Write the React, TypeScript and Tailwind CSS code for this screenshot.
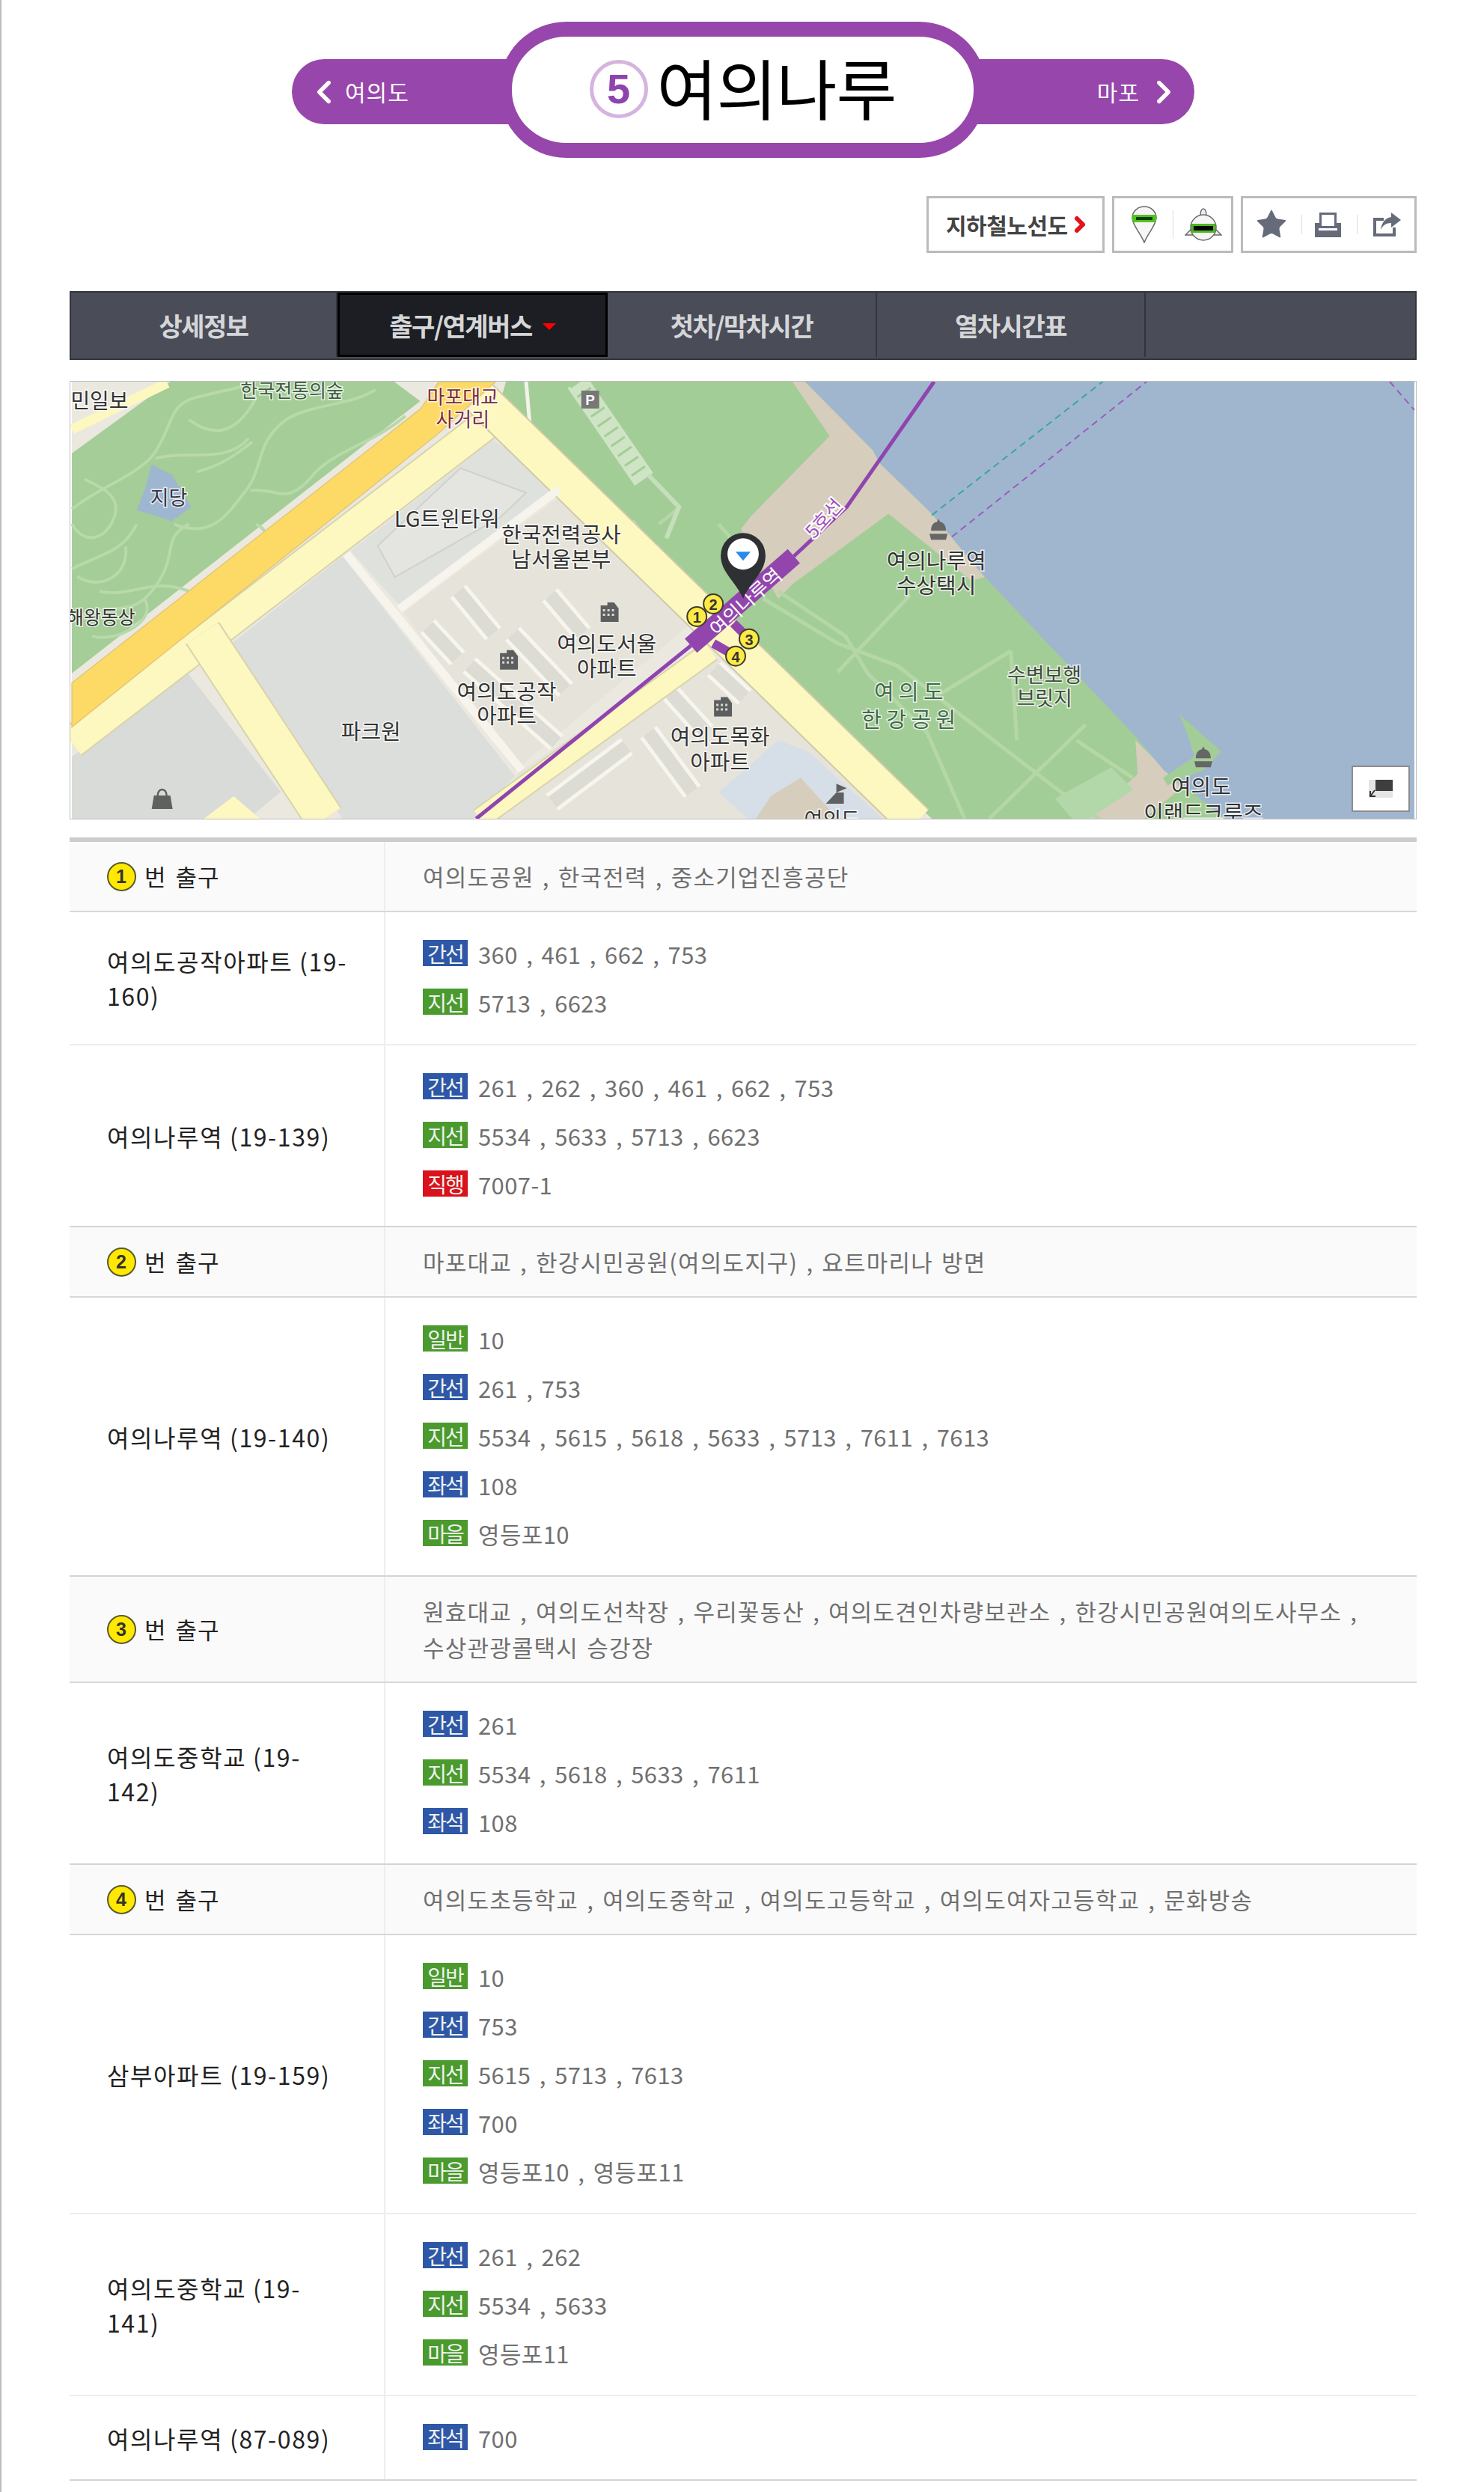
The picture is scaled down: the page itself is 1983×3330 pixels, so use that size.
import { ChevronLeft, ChevronRight, Star } from 'lucide-react'

type Line = [string, string]

interface Stop {
  name: string
  lines: Line[]
}

interface Exit {
  no: number
  desc: string
  stops: Stop[]
}

const badgeColors: Record<string, string> = {
  간선: 'bg-[#2f57a8]',
  지선: 'bg-[#4b9a2e]',
  직행: 'bg-[#d9121c]',
  일반: 'bg-[#4b9a2e]',
  좌석: 'bg-[#2f57a8]',
  마을: 'bg-[#4b9a2e]',
}

const exits: Exit[] = [
  {
    no: 1,
    desc: '여의도공원 , 한국전력 , 중소기업진흥공단',
    stops: [
      {
        name: '여의도공작아파트 (19-\n160)',
        lines: [
          ['간선', '360 , 461 , 662 , 753'],
          ['지선', '5713 , 6623'],
        ],
      },
      {
        name: '여의나루역 (19-139)',
        lines: [
          ['간선', '261 , 262 , 360 , 461 , 662 , 753'],
          ['지선', '5534 , 5633 , 5713 , 6623'],
          ['직행', '7007-1'],
        ],
      },
    ],
  },
  {
    no: 2,
    desc: '마포대교 , 한강시민공원(여의도지구) , 요트마리나 방면',
    stops: [
      {
        name: '여의나루역 (19-140)',
        lines: [
          ['일반', '10'],
          ['간선', '261 , 753'],
          ['지선', '5534 , 5615 , 5618 , 5633 , 5713 , 7611 , 7613'],
          ['좌석', '108'],
          ['마을', '영등포10'],
        ],
      },
    ],
  },
  {
    no: 3,
    desc: '원효대교 , 여의도선착장 , 우리꽃동산 , 여의도견인차량보관소 , 한강시민공원여의도사무소 ,\n수상관광콜택시 승강장',
    stops: [
      {
        name: '여의도중학교 (19-\n142)',
        lines: [
          ['간선', '261'],
          ['지선', '5534 , 5618 , 5633 , 7611'],
          ['좌석', '108'],
        ],
      },
    ],
  },
  {
    no: 4,
    desc: '여의도초등학교 , 여의도중학교 , 여의도고등학교 , 여의도여자고등학교 , 문화방송',
    stops: [
      {
        name: '삼부아파트 (19-159)',
        lines: [
          ['일반', '10'],
          ['간선', '753'],
          ['지선', '5615 , 5713 , 7613'],
          ['좌석', '700'],
          ['마을', '영등포10 , 영등포11'],
        ],
      },
      {
        name: '여의도중학교 (19-\n141)',
        lines: [
          ['간선', '261 , 262'],
          ['지선', '5534 , 5633'],
          ['마을', '영등포11'],
        ],
      },
      {
        name: '여의나루역 (87-089)',
        lines: [['좌석', '700']],
      },
    ],
  },
]

const tabs = [
  { label: '상세정보', width: 'w-[356px]' },
  { label: '출구/연계버스', width: 'w-[361px]' },
  { label: '첫차/막차시간', width: 'w-[360px]' },
  { label: '열차시간표', width: 'w-[359px]' },
  { label: '', width: 'flex-1' },
]

function Label({ x, y, size = 27, fill = '#333', children }: { x: number; y: number; size?: number; fill?: string; children: string }) {
  return (
    <text x={x} y={y} fontSize={size} fill={fill} textAnchor="middle" dominantBaseline="central" stroke="#fff" strokeOpacity={0.75} strokeWidth={3} paintOrder="stroke">
      {children}
    </text>
  )
}

function Strip({ d, w = 18 }: { d: string; w?: number }) {
  return (
    <>
      <path d={d} fill="none" stroke="#f7f5ee" strokeWidth={w + 10} />
      <path d={d} fill="none" stroke="#dddcd4" strokeWidth={w} />
    </>
  )
}

function Building({ x, y }: { x: number; y: number }) {
  return (
    <g transform={`translate(${x - 12} ${y - 13})`}>
      <path d="M0 26V4h9V0h9l6 8v18z" fill="#5d5f5f" />
      <path d="M3 9h3v3H3zm6 0h3v3H9zm6 0h3v3h-3zM3 15h3v3H3zm6 0h3v3H9zm6 0h3v3h-3z" fill="#d8d8d4" />
    </g>
  )
}

function Boat({ x, y }: { x: number; y: number }) {
  return (
    <g transform={`translate(${x - 12} ${y - 14})`} fill="#666">
      <path d="M12 0l2 4c5 1 8 5 8 12H2C2 9 5 5 10 4z" />
      <path d="M0 20h24l-2 8H2z" />
    </g>
  )
}

function Exit({ no, size = 26 }: { no: number; size?: number }) {
  const pos: Record<number, [number, number]> = { 1: [931, 824], 2: [953, 807], 3: [1001, 854], 4: [983, 877] }
  const [x, y] = pos[no]
  return (
    <g>
      <circle cx={x} cy={y} r={size / 2} fill="#fdea45" stroke="#3b3b2c" strokeWidth={2} />
      <text x={x} y={y + 1} fontSize={20} fontWeight={700} fill="#333" textAnchor="middle" dominantBaseline="central" className="font-['Liberation_Sans',sans-serif]">
        {no}
      </text>
    </g>
  )
}

function MapArt() {
  return (
    <svg viewBox="93 509 1800 586" className="block w-full h-full font-['Noto_Sans_CJK_KR',sans-serif]">
      <rect x="93" y="509" width="1800" height="586" fill="#ebe8df" />
      {/* parks */}
      <path d="M93 605L225 509H525L560 535L93 900z" fill="#a4cd97" />
      <path d="M675 509H1200L1640 1095H1246L1018 880L948 809L667 537z" fill="#a3cd96" />
      <path d="M93 573L221 511" stroke="#fdf8c0" strokeWidth={13} fill="none" />
      {/* left park paths */}
      <g fill="none" stroke="#b8d9aa" strokeWidth={4}>
        <path d="M93 680C130 650 170 640 200 610C230 570 220 540 260 530C300 520 330 515 340 509" />
        <path d="M93 760C130 740 160 740 180 700M93 830C130 800 170 830 200 790C240 740 210 720 250 700" />
        <path d="M230 700C280 720 300 690 330 650C350 620 340 590 380 560C410 540 470 540 500 520" />
        <path d="M130 790C170 800 200 770 250 790C280 800 300 770 330 740M260 630C300 620 320 600 335 590" />
        <path d="M93 700C110 730 140 720 150 690C160 660 130 650 110 640" />
        <path d="M205 612C250 600 300 620 330 585M332 655C370 650 380 680 420 630C450 600 500 590 540 555" />
        <path d="M100 770C130 790 170 770 165 730M300 760C330 770 380 720 340 700M250 560C290 590 320 570 340 530M120 850C150 860 210 830 190 800" />
      </g>
      <path d="M200 620L227 634L253 677L227 696L180 681L191 653z" fill="#9fb6d0" />
      {/* river bank and sand */}
      <path d="M1003 690L1109 582L1059 509H1076L1167 601L1176 618L1246 686L1317 771L1299 776L1188 686L1060 780L1040 800L990 707z" fill="#d6cdbc" />
      <path d="M1519 990L1560 1030L1580 1054L1531 1095H1452L1499 1056L1522 1035z" fill="#d6cdbc" />
      <path d="M1076 509H1893V1095H1640L1557 1030L1522 988L1317 771L1246 686L1176 618L1167 601z" fill="#a0b6cf" />
      <path d="M1578 955L1634 1005L1610 1030L1562 1050L1556 1040L1598 1012L1590 985z" fill="#a3cd96" />
      <path d="M1411 1068L1487 1026L1516 1056L1457 1095H1434z" fill="#b2d8aa" />
      <path d="M1246 688L1475 509" stroke="#3aa6a0" strokeWidth={2} strokeDasharray="9 6" fill="none" />
      <path d="M1273 717L1534 509M1860 509L1893 547" stroke="#9a5cbc" strokeWidth={2} strokeDasharray="9 6" fill="none" />
      {/* right park paths */}
      <g fill="none" stroke="#b5d7a8" strokeWidth={5}>
        <path d="M1020 800L1120 860L1200 890L1290 960L1420 1060L1470 1095" />
        <path d="M1040 790L1130 850L1160 900L1240 980L1290 1095" />
        <path d="M1120 898L1217 795M1252 931L1352 870M1323 1095L1452 969M1352 870L1360 990M1440 990L1515 1040" />
        <path d="M880 700L905 680M1000 745L960 700" />
      </g>
      {/* top green: parking and paths */}
      <path d="M770 509L860 640" stroke="#cfe3c5" strokeWidth={30} fill="none" />
      <path d="M770 509L860 640" stroke="#a3cd96" strokeWidth={22} strokeDasharray="3 13" fill="none" />
      <path d="M702 509L708 578L755 620" stroke="#f4f3ea" strokeWidth={5} fill="none" />
      <path d="M866 634L907 677L890 719" stroke="#c5dfba" strokeWidth={6} fill="none" />
      {/* city blocks */}
      <path d="M306 861L456 743L687 1038L632 1095H455z" fill="#dcdedb" />
      <path d="M93 1012L247 898L373 1059L330 1095H93z" fill="#d9dbd8" />
      <path d="M467 736L658 587L746 648L532 809z" fill="#dfe1dd" />
      <path d="M503 729L614 625L702 658L667 691L526 771z" fill="#e4e5e0" stroke="#cfd1cc" strokeWidth={2} />
      <path d="M538 818L749 662L919 837L687 1030z" fill="#e6e3da" />
      <path d="M696 1030L943 866L1200 1095H640z" fill="#e6e3da" />
      <path d="M1040 990L1080 1005L1180 1095H1000L960 1060z" fill="#d6dee7" />
      <path d="M1030 1065L1070 1040L1120 1095H1010z" fill="#d6cdbc" />
      {/* apartment strips */}
      <Strip d="M570 837L610 880" />
      <Strip d="M611 790L658 847" />
      <Strip d="M734 795L778 847" />
      <Strip d="M626 889L743 993" />
      <Strip d="M684 847L755 922" />
      <Strip d="M737 1073L837 998" />
      <Strip d="M866 979L925 1059" />
      <Strip d="M896 927L943 979" />
      <Strip d="M954 894L995 932" />
      <path d="M840 700L900 770" stroke="#f7f5ee" strokeWidth={16} fill="none" />
      {/* roads */}
      <path d="M93 993L650 565" stroke="#d8d3ad" strokeWidth={44} fill="none" />
      <path d="M93 993L650 565" stroke="#fdf8c0" strokeWidth={40} fill="none" />
      <path d="M268 846L432 1095" stroke="#d8d3ad" strokeWidth={54} fill="none" />
      <path d="M268 846L432 1095" stroke="#fdf8c0" strokeWidth={50} fill="none" />
      <path d="M640 530L1225 1100" stroke="#cfcaa8" strokeWidth={50} fill="none" />
      <path d="M640 530L1225 1100" stroke="#fdf8c0" strokeWidth={46} fill="none" />
      <path d="M640 1095L950 870" stroke="#d8d3ad" strokeWidth={30} fill="none" />
      <path d="M640 1095L950 870" stroke="#fdf8c0" strokeWidth={26} fill="none" />
      <path d="M93 913L561 545L585 509H661L585 578L93 972z" fill="#fdda66" stroke="#e0c87a" strokeWidth={1.5} />
      <path d="M532 814L746 653M461 740L696 1030" stroke="#f6f4ec" strokeWidth={11} fill="none" />
      <path d="M270 1095L310 1065L345 1095z" fill="#fdf8c0" />
      {/* line 5 */}
      <path d="M1061 743L1132 677L1249 509M923 863L635 1095" stroke="#8f44b0" strokeWidth={5} fill="none" />
      <path d="M980 833L1000 853M953 860L983 877" stroke="#9246ad" strokeWidth={12} fill="none" />
      <path d="M923 863L1061 743" stroke="#9246ad" strokeWidth={25} fill="none" />
      <g className="font-['Noto_Sans_CJK_KR',sans-serif]">
        <text x={995} y={803} fontSize={26} fill="#fff" textAnchor="middle" dominantBaseline="central" transform="rotate(-42 995 803)">
          여의나루역
        </text>
        <text x={1100} y={691} fontSize={25} fill="#a04fc0" stroke="#fff" strokeWidth={4} paintOrder="stroke" textAnchor="middle" dominantBaseline="central" transform="rotate(-48 1100 691)">
          5호선
        </text>
      </g>
      {[1, 2, 3, 4].map((n) => (
        <Exit key={n} no={n} />
      ))}
      {/* pin */}
      <path d="M993 800C984 778 963 765 963 742A30 30 0 0 1 1023 742C1023 765 1002 778 993 800z" fill="#2e3033" />
      <circle cx={993} cy={740} r={21} fill="#fff" />
      <path d="M983 737H1003L993 749z" fill="#2a8ae8" />
      {/* poi icons */}
      <rect x={776} y={521} width={24} height={24} fill="#777" />
      <text x={788} y={534} fontSize={19} fontWeight={700} fill="#fff" textAnchor="middle" dominantBaseline="central" className="font-['Liberation_Sans',sans-serif]">
        P
      </text>
      <Building x={814} y={818} />
      <Building x={679} y={882} />
      <Building x={966} y={945} />
      <Boat x={1255} y={707} />
      <Boat x={1610} y={1012} />
      <path d="M1104 1075H1128V1060H1118V1048L1132 1054L1118 1060" fill="#5f6060" />
      <path d="M203 1064H225L228 1082H200z" fill="#5f6060" />
      <path d="M208 1064C208 1053 220 1053 220 1064" fill="none" stroke="#5f6060" strokeWidth={2.5} />
      {/* labels */}
      <Label x={130} y={533} size={28}>민일보</Label>
      <Label x={388} y={519} size={25} fill="#3d5c40">한국전통의숲</Label>
      <Label x={617} y={528} size={26} fill="#7a2b3b">마포대교</Label>
      <Label x={617} y={558} size={26} fill="#7a2b3b">사거리</Label>
      <Label x={223} y={663} size={27} fill="#334">지당</Label>
      <Label x={132} y={823} size={25} fill="#333">해왕동상</Label>
      <Label x={596} y={691} size={29}>LG트윈타워</Label>
      <Label x={749} y={712} size={29}>한국전력공사</Label>
      <Label x={749} y={745} size={29}>남서울본부</Label>
      <Label x={810} y={858} size={29}>여의도서울</Label>
      <Label x={810} y={891} size={29}>아파트</Label>
      <Label x={676} y={922} size={29}>여의도공작</Label>
      <Label x={676} y={955} size={29}>아파트</Label>
      <Label x={494} y={976} size={29}>파크원</Label>
      <Label x={962} y={983} size={29}>여의도목화</Label>
      <Label x={962} y={1017} size={29}>아파트</Label>
      <Label x={1252} y={747} size={29}>여의나루역</Label>
      <Label x={1252} y={780} size={29}>수상택시</Label>
      <Label x={1215} y={922} size={29} fill="#3f6b4a">여 의 도</Label>
      <Label x={1215} y={960} size={29} fill="#3f6b4a">한 강 공 원</Label>
      <Label x={1397} y={901} size={27} fill="#3d4a3d">수변보행</Label>
      <Label x={1397} y={932} size={27} fill="#3d4a3d">브릿지</Label>
      <Label x={1607} y={1050} size={29}>여의도</Label>
      <Label x={1610} y={1085} size={29}>이랜드크루즈</Label>
      <Label x={1112} y={1095} size={27}>여의도</Label>
      <Label x={212} y={1108} size={27}>IFC몰</Label>
    </svg>
  )
}

function PinIcon() {
  return (
    <svg viewBox="0 0 34 50" className="w-[34px] h-[50px]">
      <path d="M17 49C12 36 1 26 1 16A16 15 0 0 1 33 16C33 26 22 36 17 49z" fill="#f6f6f6" stroke="#6a6a6a" strokeWidth={1.5} />
      <path d="M1 12H33V22H1z" fill="#53c21f" />
      <path d="M6 15H28V19H6z" fill="#143b0a" />
    </svg>
  )
}

function BoatIcon() {
  return (
    <svg viewBox="0 0 50 44" className="w-[50px] h-[44px]">
      <path d="M25 1C22 1 21 4 21 11H29C29 4 28 1 25 1z" fill="#eee" stroke="#6a6a6a" strokeWidth={1.5} />
      <path d="M10 27L1 36H13M40 27L49 36H37" fill="#eee" stroke="#6a6a6a" strokeWidth={1.5} />
      <circle cx={25} cy={26} r={17} fill="#f6f6f6" stroke="#6a6a6a" strokeWidth={1.5} />
      <path d="M9 21H41V33H9z" fill="#4fb81f" />
      <path d="M12 24H38V30H12z" fill="#050505" />
    </svg>
  )
}

function Badge({ type }: { type: string }) {
  return (
    <span className={`${badgeColors[type]} mt-[14px] flex h-[35px] w-[60px] shrink-0 items-center justify-center text-[28px] leading-none tracking-[-2px] text-[#eef3ee]`}>
      {type}
    </span>
  )
}

function ExitBadge({ no }: { no: number }) {
  return (
    <span className="flex h-[39px] w-[39px] shrink-0 items-center justify-center rounded-full border-2 border-[#5a5a30] bg-[#ffe900] font-['Liberation_Sans',sans-serif] text-[25px] font-bold leading-none text-[#333]">
      {no}
    </span>
  )
}

export default function App() {
  return (
    <div className="min-h-[3330px] border-l-2 border-[#bcbcbc] bg-white pl-[91px] font-['Noto_Sans_CJK_KR',sans-serif]">
      <div className="w-[1800px] pt-[29px]">
        {/* station title */}
        <div className="relative flex h-[182px] items-center justify-center">
          <div className="mt-[5px] flex h-[87px] w-[1206px] items-center justify-between rounded-[44px] bg-[#9747ab] pl-[18px] pr-[16px] text-[30px] text-white">
            <span className="flex items-center gap-[3px] tracking-[1px]">
              <ChevronLeft size={50} strokeWidth={2.6} />
              여의도
            </span>
            <span className="flex items-center gap-[7px] tracking-[1px]">
              마포
              <ChevronRight size={50} strokeWidth={2.6} />
            </span>
          </div>
          <div className="absolute left-[574px] top-0 flex h-[182px] w-[651px] items-center justify-center rounded-[90px] border-x-[17px] border-y-[20px] border-[#9747ab] bg-white">
            <span className="mr-[12px] mb-[2px] flex h-[78px] w-[78px] items-center justify-center rounded-full border-[5px] border-[#d5b4e0] font-['Liberation_Sans',sans-serif] text-[56px] font-bold leading-none text-[#8e44ad]">
              5
            </span>
            <span className="mb-[10px] text-[88px] leading-none tracking-[-1px] text-black">여의나루</span>
          </div>
        </div>

        {/* map shortcuts */}
        <div className="mt-[51px] flex h-[76px] justify-end gap-[10px]">
          <div className="flex w-[238px] items-center border-[3px] border-[#bbb] pl-[23px]">
            <span className="text-[30px] font-bold tracking-[-0.5px] text-[#444]">지하철노선도</span>
            <ChevronRight size={32} strokeWidth={4.5} className="text-[#e3131b]" />
          </div>
          <div className="flex w-[162px] items-center border-[3px] border-[#bbb] pl-[23px]">
            <PinIcon />
            <span className="ml-[21px] mr-[15px] h-[38px] w-[1px] bg-[#ddd]" />
            <BoatIcon />
          </div>
          <div className="flex w-[235px] items-center border-[3px] border-[#bbb] pl-[15px] text-[#666b7a]">
            <Star size={46} fill="currentColor" strokeWidth={0} />
            <span className="mx-[17px] h-[26px] w-[1px] bg-[#ddd]" />
            <svg viewBox="0 0 35 33" className="h-[33px] w-[35px]" fill="currentColor">
              <path d="M6 0H29V14H35V33H0V14H6zM9 3V18H26V3zM5 21V24H30V21z" fillRule="evenodd" />
            </svg>
            <span className="mx-[21px] h-[26px] w-[1px] bg-[#ddd]" />
            <svg viewBox="0 0 37 32" className="h-[32px] w-[37px]" fill="currentColor">
              <path d="M0 7H14V11H4V28H26V20H30V32H0z" />
              <path d="M24 0L37 10L24 20V14C17 14 13 17 10 23C11 14 16 7 24 6z" />
            </svg>
          </div>
        </div>

        {/* tabs */}
        <div className="mt-[51px] flex h-[92px] border-2 border-[#33353d] bg-[#4a4d58]">
          {tabs.map((tab, i) => (
            <div
              key={i}
              className={
                i === 1
                  ? `${tab.width} mb-[2px] flex items-center justify-center border-[3px] border-black bg-[#1c1e24] text-[34px] font-bold tracking-[-1.5px] text-[#d5d6d8]`
                  : `${tab.width} mb-[2px] flex items-center justify-center border-r-2 border-[#33353d] text-[34px] font-bold tracking-[-1.5px] text-[#d5d6d8] last:border-r-0`
              }
            >
              {tab.label}
              {i === 1 && <span className="ml-[14px] mt-[4px] h-0 w-0 border-x-[9px] border-t-[9px] border-x-transparent border-t-[#ff0000]" />}
            </div>
          ))}
        </div>

        {/* map */}
        <div className="relative mt-[28px] h-[586px] border border-[#bdbdbd]">
          <MapArt />
          <div className="absolute bottom-[9px] right-[8px] flex h-[62px] w-[78px] items-center justify-center border-2 border-[#8c8c8c] bg-white">
            <svg viewBox="0 0 32 24" className="h-[24px] w-[32px]">
              <rect x={0} y={0} width={32} height={24} fill="#e4e4e4" />
              <rect x={9} y={0} width={23} height={15} fill="#3e3e3e" />
              <path d="M8 14L2 22M2 15V22H9" stroke="#333" strokeWidth={2} fill="none" />
            </svg>
          </div>
        </div>

        {/* exits */}
        <div className="mt-[24px] border-t-[6px] border-[#cccccc]">
          {exits.map((exit) => (
            <div key={exit.no}>
              <div className="flex border-b-2 border-[#d8d8d8] bg-[#fafafa]">
                <div className="flex w-[422px] shrink-0 items-center gap-[11px] border-r-2 border-[#eeeeee] pl-[50px] text-[31px] leading-[48px] tracking-[1px] text-[#222] [word-spacing:4px]">
                  <ExitBadge no={exit.no} />
                  번 출구
                </div>
                <div className="whitespace-pre-line py-[22px] pl-[50px] text-[31px] leading-[48px] tracking-[1.2px] text-[#707070] [word-spacing:3px]">{exit.desc}</div>
              </div>
              {exit.stops.map((stop, i) => (
                <div key={i} className={`flex border-b-2 ${i === exit.stops.length - 1 ? 'border-[#d4d4d4]' : 'border-[#eeeeee]'}`}>
                  <div className="flex w-[422px] shrink-0 items-center whitespace-pre-line border-r-2 border-[#eeeeee] pl-[50px] text-[32px] leading-[46px] tracking-[1.6px] text-[#222]">
                    {stop.name}
                  </div>
                  <div className="py-[23px] pl-[50px]">
                    {stop.lines.map(([type, text]) => (
                      <div key={type} className="flex h-[65px] gap-[14px]">
                        <Badge type={type} />
                        <span className="mt-[11px] text-[31px] leading-[44px] tracking-[0.4px] text-[#707070] [word-spacing:4px]">{text}</span>
                      </div>
                    ))}
                  </div>
                </div>
              ))}
            </div>
          ))}
        </div>
      </div>
    </div>
  )
}
